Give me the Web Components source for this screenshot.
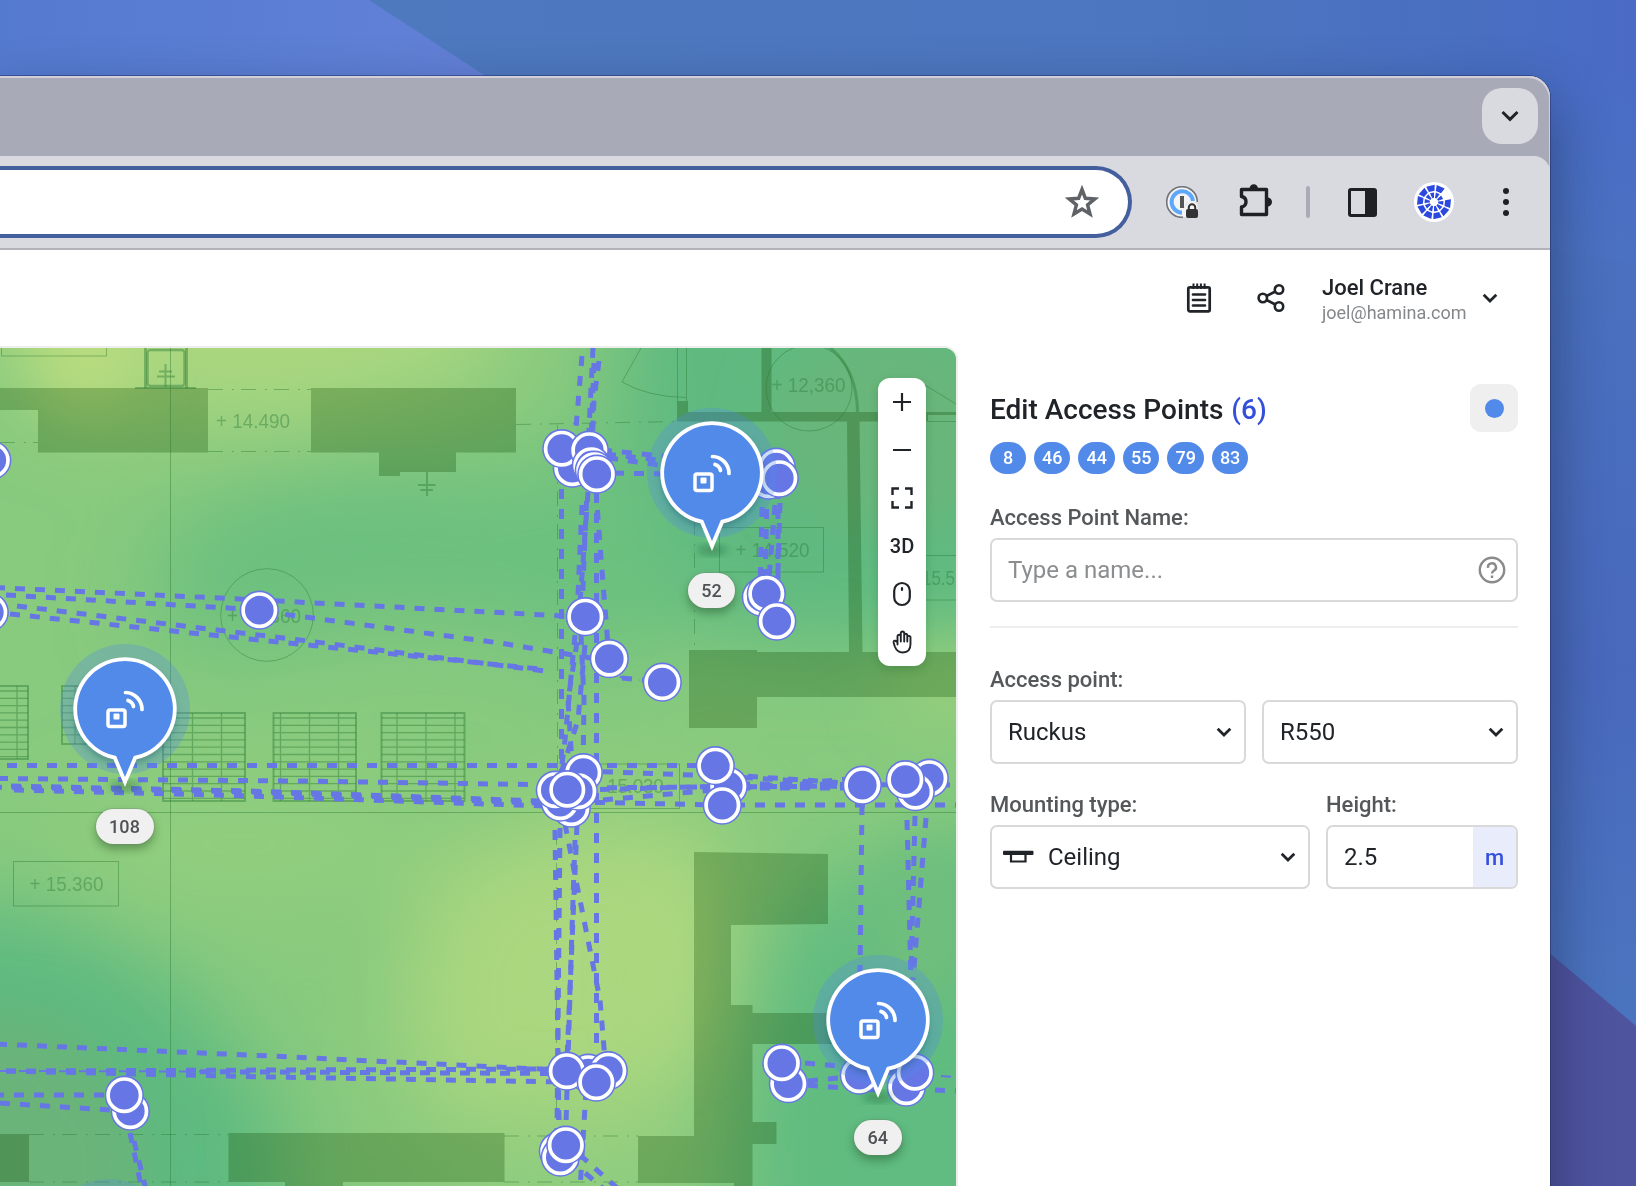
<!DOCTYPE html>
<html lang="en">
<head>
<meta charset="utf-8">
<title>Edit Access Points</title>
<style>
html,body{margin:0;height:100%;overflow:hidden}
body{font-family:Roboto,"Liberation Sans",sans-serif;color:#202428}
</style>
</head>
<body>
<desk-top>
  <browser-window>
    <tab-strip slot="chrome"></tab-strip>
    <tool-bar slot="chrome"></tool-bar>
    <app-header name="Joel Crane" mail="joel@hamina.com"></app-header>
    <app-main>
      <heat-map slot="map">
        <ap-pin style="left:711.6px;top:124.5px">52</ap-pin>
        <ap-pin style="left:124.5px;top:360.7px">108</ap-pin>
        <ap-pin style="left:877.8px;top:672.3px">64</ap-pin>
        <map-tools slot="tools"></map-tools>
      </heat-map>
      <edit-panel></edit-panel>
    </app-main>
  </browser-window>
</desk-top>
<script>
const def=(name,html,after)=>customElements.define(name,class extends HTMLElement{
  connectedCallback(){
    if(this.shadowRoot)return;
    const r=this.attachShadow({mode:'open'});
    r.innerHTML=typeof html==='function'?html(this):html;
    if(after)after(r,this);
  }
});

def('desk-top',`<style>
:host{display:grid;width:1636px;height:1186px;overflow:hidden;background:#4a72bd}
svg,div{grid-area:1/1}
div{padding-top:76px;box-sizing:border-box;height:1186px}
</style>
<svg width="1636" height="1186" aria-hidden="true">
<defs>
<linearGradient id="a" x1="0" y1="0" x2="1" y2="0"><stop offset="0" stop-color="#547acf"/><stop offset=".8" stop-color="#5f80d6"/><stop offset="1" stop-color="#637fd6"/></linearGradient>
<linearGradient id="b" x1="0" y1="0" x2="1" y2="0"><stop offset=".25" stop-color="#4e79bf"/><stop offset=".7" stop-color="#4c76bf"/><stop offset=".9" stop-color="#496fc1"/><stop offset="1" stop-color="#4a6ac6"/></linearGradient>
<linearGradient id="b2" x1="0" y1="0" x2="0" y2="1"><stop offset="0" stop-color="#4a6cc5"/><stop offset="1" stop-color="#4b77bf"/></linearGradient>
<linearGradient id="c" x1="0" y1="0" x2="0" y2="1"><stop offset="0" stop-color="#4a71bf"/><stop offset=".45" stop-color="#4969bd"/><stop offset=".8" stop-color="#4b74bf"/></linearGradient>
</defs>
<rect width="1636" height="1186" fill="url(#b)"/>
<rect x="1545" y="76" width="91" height="190" fill="url(#b2)" opacity=".55"/>
<path d="M0 0H369L487 77V100H0Z" fill="url(#a)"/>
<path d="M1540 247L1636 264V1186H1540Z" fill="url(#c)"/>
<path d="M1540 945L1636 1026V1186H1540Z" fill="#4f549f"/>
</svg><div><slot></slot></div>`);

def('browser-window',`<style>
:host{display:flex;flex-direction:column;width:1550px;height:1150px;background:#fff;border-radius:0 21px 0 0;box-shadow:0 0 0 1px rgba(25,40,90,.45),0 26px 60px rgba(15,25,50,.46)}
.c{background:#a8aab8;border-radius:0 21px 0 0;box-shadow:inset -1px 2px 0 #d2cfda}
</style><div class="c"><slot name="chrome"></slot></div><slot></slot>`);

def('tab-strip',`<style>
:host{display:flex;height:80px;align-items:center;justify-content:flex-end;padding-right:12px}
.b{width:56px;height:56px;border-radius:20px;background:#d9dae0;display:grid;place-items:center}
</style><div class="b"><svg width="20" height="14" fill="none" stroke="#202124" stroke-width="3"><path d="M2.5 3L10 10.3 17.5 3"/></svg></div>`);

const seg=(n,r0,r1,skip)=>{let o='';for(let i=0;i<n;i++){if(i===skip)continue;
  const g=.09*11/r1,a=i*2*Math.PI/n+g-1.47,b=(i+1)*2*Math.PI/n-g-1.47,p=(r,t)=>(20+r*Math.cos(t)).toFixed(1)+' '+(20+r*Math.sin(t)).toFixed(1);
  o+=`M${p(r0,a)}L${p(r1,a)}L${p(r1,b)}L${p(r0,b)}Z`;}return o};
def('tool-bar',`<style>
:host{display:flex;height:92px;box-sizing:content-box;border-bottom:2px solid #b2b3ba;background:#d9dae0;border-radius:0 16px 0 0;align-items:center}
.u{width:1132px;height:72px;box-sizing:border-box;border:4px solid #435f9e;border-left:0;border-radius:0 36px 36px 0;background:#fff;display:flex;align-items:center;justify-content:flex-end;padding-right:29px}
.i{display:flex;align-items:center;flex:1}
svg{display:block;flex:none}
.s{width:4px;height:32px;border-radius:2px;background:#aaabb9;margin:0 38px 0 33px}
</style>
<div class="u"><svg width="34" height="34" viewBox="0 0 34 34" fill="none" stroke="#5f6368" stroke-width="3.5"><path d="M17 4.500L20.4 13.3 29.8 13.9 22.600 19.900 25 29 17 24 9 29 11.400 19.900 4.200 13.900 13.600 13.300Z"/></svg></div>
<div class="i">
<svg style="margin-left:34px" width="32" height="32" viewBox="0 0 32 32"><circle cx="16" cy="16" r="15.3" fill="#f4f4f4" stroke="#747478" stroke-width="1.6"/><path d="M27 15A10.7 10.7 0 1 0 16 26.7" fill="none" stroke="#5ea7fb" stroke-width="4"/><rect x="14" y="10" width="4" height="12" fill="#565656"/><path d="M17 32V24L21 16H32V32Z" fill="#d9dae0"/><path d="M17 31V24L22 16H28L31.5 18V31Z" fill="#f4f4f4"/><rect x="20" y="23" width="12" height="9" rx="2" fill="#333"/><path d="M22.8 24V21.5A3.2 3.2 0 0 1 29.2 21.5V24" fill="none" stroke="#333" stroke-width="2"/></svg>
<svg style="margin:-4px 0 0 41px" width="34" height="36" viewBox="0 0 34 36" fill="none" stroke="#1f2023" stroke-width="3.4" stroke-linejoin="round"><path d="M2.500 7.500H27.500V32.500H2.500V25C8.500 24 8.500 15.500 2.500 14.500Z"/><path fill="#1f2023" stroke="none" d="M10.500 6.500A4.200 4.200 0 0 1 19 6.500ZM28.500 15.500A4.400 4.400 0 0 1 28.500 24.500Z"/></svg>
<div class="s"></div>
<svg width="29" height="29" viewBox="0 0 29 29"><rect x="1.5" y="1.5" width="26" height="26" rx="1.5" fill="none" stroke="#1f2023" stroke-width="3"/><path fill="#1f2023" d="M17 1H28V28H17Z"/></svg>
<svg style="margin-left:37px" width="40" height="40"><circle cx="20" cy="20" r="20" fill="#fff"/><path fill="#2b49de" d="${seg(10,11.2,17.2,1)}${seg(10,4.2,9.6)}"/></svg>
<svg style="margin-left:49px" width="6" height="28" fill="#1f2023"><circle cx="3" cy="3" r="3"/><circle cx="3" cy="14" r="3"/><circle cx="3" cy="25" r="3"/></svg>
</div>`);

def('app-header',h=>`<style>
:host{display:flex;height:96px;align-items:center;justify-content:flex-end;padding-right:52px}
svg{display:block;flex:none}
.t{width:167px;margin-left:37px}
b{display:block;font:500 22px/26px Roboto;margin-top:3px}
span{display:block;font:400 18px/24px Roboto;color:#85888b}
</style>
<svg width="26" height="32" viewBox="0 0 26 32" fill="none" stroke="#202428" stroke-width="2.7"><rect x="2.3" y="5.3" width="21.4" height="24" rx="1.5"/><path d="M7 12.500H19M7 18H19M7 23.500H19" stroke-linecap="round"/><path d="M7.500 1.500V7M11.200 1.500V7M14.900 1.500V7M18.600 1.500V7" stroke-width="2"/></svg>
<svg style="margin-left:45px" width="28" height="30" viewBox="0 0 28 30" fill="none" stroke="#202428" stroke-width="2.6"><circle cx="5.8" cy="15" r="4.2"/><circle cx="22" cy="6.500" r="4.2"/><circle cx="22" cy="23.500" r="4.2"/><path d="M9.500 13L18.300 8.500M9.500 17L18.300 21.500"/></svg>
<div class="t"><b>${h.getAttribute('name')}</b><span>${h.getAttribute('mail')}</span></div>
<svg style="margin-left:-7px" width="16" height="12" fill="none" stroke="#202428" stroke-width="2.7"><path d="M1.7 2.7L8 9 14.3 2.7"/></svg>
`);

def('app-main',`<style>
:host{display:flex;flex:1;min-height:0}
</style><slot name="map"></slot><slot></slot>`);

const lines=[
[-5,587.5,240,599,584,617],[6,595,245,609,500,643,609,661],[17,606,300,640,545,671],[10,614,240,638,500,665,540,669],[622,678,662,682],
[7,765.5,567,765.5],[-2,778.5,300,781,560,785],[11,786,250,791,540,801],[14,790,250,796,545,806],[-8,787,250,792,540,803],
[607,765.5,715,765.5],[583,771,720,776,862,785],[567,788,862,786],[580,790,728,786,862,785],[603,800,725,789,862,778],[575,802,722,805,956,805],[740,784,956,785],[740,788,862,788],[728,775,862,784],
[-3,1044,270,1056,560,1070],[6,1071,560,1069],[6,1071,270,1077,567,1082],[200,1071.7,560,1073.5],[-6,1095,110,1095],[0,1103,110,1110],
[130,1133,142,1190],[134,1141,146,1190],
[582,356,575,440],[599,361,594,400,592,450],[593,348,588,450],[594,363,591,440],
[561.5,489,561.5,790],[596.5,493,596.5,1045],[588,492,579,617],[586.5,501,584,560,582,617],[596,490,600,545,609,658],[582,505,577,617],
[575,635,565,740,560,780],[581,635,584,700,583,770],[577,642,568,700,573,780],[585,645,578,720,562,770],
[555,830,559,1130],[560,828,557,1130],[565,824,574,870,600,1000,605,1060],[577,825,567,1060],[575,840,571,960,568,1060],
[558,1090,559,1122],[567,1090,566,1125],[586,1090,580,1190],[580,1155,625,1195],[570,1160,605,1190],
[602,450,711,461],[608,458,711,472],[614,473,711,475],[606,454,711,466]];
lines.push([762,507,760,590],[767,489,765,590],[778,489,778,590],[780,503,778,570],[775,505,768,590],
[862,805,860,975],[907,820,911,980],[915,816,911,975],[926,818,913,980],
[805,1063,914,1073],[808,1081,914,1070],[788,1084,906,1092],[935,1090,960,1091]);
const thin=[[-1,1071,200,1071.5],[600,674,640,680],[941,1076,956,1077]];
const nodes=[[-8.5,460],[-11,612],[259,610],[572,468],[561.5,448.5],[589,450],[591,465],[594,470],[596.5,474],
[763,478],[768,480],[776,467],[779,478],[761,597],[766,593.5],[776.5,621],[585,616.5],[609,658.5],[662,682],
[583,772.5],[571,808],[560,802],[555,790],[578,791],[567,789.5],[728,786],[715,765.5],[722,805],[862,785],[929,778],[915,791.5],[905,779.5],
[130,1111],[124,1095],[588,1073],[608,1070.5],[566.5,1071],[596,1082],[558,1151],[560,1157],[565.5,1145],
[788,1083.5],[781.5,1063],[859,1075],[906,1087],[914.5,1072.5]].map(([x,y])=>[x+.3,y+.2]);
const stall=(x,y,w,h,v)=>{let d=`M${x} ${y}h${w}v${h}h${-w}z`,t='';for(let i=5;i<h-2;i+=7.3)t+=`M${x} ${y+i}h${w}`;v.forEach(k=>t+=`M${k} ${y}v${h}`);return `<path d="${d}" stroke-width="2"/><path d="${t}" stroke-width="1.3"/>`};
def('heat-map',()=>`<style>
:host{display:block;position:relative;width:956px;height:840px;border:solid #eee;border-width:2px 2px 0 0;border-radius:0 14px 0 0;overflow:hidden}
svg{display:block}
text{font:19.6px "Liberation Sans",Arial,sans-serif;fill:#2f7a3a;fill-opacity:.42}
.tools{position:absolute;left:878px;top:30px}
</style>
<svg width="956" height="838" viewBox="0 348 956 838">
<defs><filter id="f" filterUnits="userSpaceOnUse" x="-300" y="100" width="1600" height="1400"><feGaussianBlur stdDeviation="44"/></filter><filter id="g" filterUnits="userSpaceOnUse" x="-300" y="100" width="1600" height="1400"><feGaussianBlur stdDeviation="27"/></filter></defs>
<rect y="340" width="956" height="850" fill="#88ca7e"/>
<g filter="url(#f)">
<path d="M30 200H540L480 380 300 425 180 420 60 410 -20 330Z" fill="#aad77f"/>
<path d="M150 550Q250 450 420 470T560 420V640Q400 610 300 640T150 620Z" fill="#6cc07f"/>
<path d="M630 160H1150V620L820 650 620 620 610 480Z" fill="#5eba80"/>
<ellipse cx="600" cy="560" rx="80" ry="110" fill="#6cc17f"/>
<ellipse cx="240" cy="845" rx="180" ry="55" fill="#93cf7e"/>
<path d="M440 860L600 810 730 830 710 1000 680 1120 430 1120 400 1000Z" fill="#aad77f"/>
<path d="M-180 900L50 910 180 980 280 1110 290 1400H-180Z" fill="#5dba80"/>
<path d="M780 900L1150 790V1380H740L735 1080Z" fill="#60bc80"/>
<path d="M450 1150H700V1260H450Z" fill="#8fcd7f"/>
</g>
<g filter="url(#g)">
<ellipse cx="88" cy="350" rx="50" ry="62" fill="#b8db7f"/>
<ellipse cx="890" cy="430" rx="120" ry="100" fill="#69b67a"/>
<path d="M-160 1000L60 1020 140 1110 150 1360H-160Z" fill="#6ab479"/>
<ellipse cx="670" cy="970" rx="25" ry="90" fill="#aed880"/>
<ellipse cx="960" cy="690" rx="80" ry="44" fill="#93cd7c"/>
<ellipse cx="925" cy="930" rx="60" ry="80" fill="#70be7d"/>
</g>
<g fill="#c0d2b8" style="mix-blend-mode:multiply">
<path d="M0 388H208V452.500H38V410H0ZM311 388H516V452.500H456V472H400V476H379V452.500H311Z"/>
<path d="M761.500 348H771.500V412H956V415H928V421.500H859.500L862.500 652H956V697H757V728H689V650H757V652H849L847 421.500H677V401H688V412H761.500Z"/>
<path d="M694 852L828 854V924L731 925V1005H752.500V1013H845V1044H752.500V1122H776.500V1144H752.500V1186H734V1183H638V1136H694Z"/>
<path d="M0 1134H29V1182H0ZM228.500 1133H504.500V1182H343V1186H285V1182H228.500Z"/>
</g>
<g fill="none" stroke="#2b7a35" stroke-opacity=".42">
<path d="M170.500 348V1186M0 812.500H956M1.500 348V356H106.500V348M13.500 861.500H118.500V906H13.500ZM719.500 527.500H823.500V572H719.500ZM576 764H679.500V808.500H590M926 555.500H956M926 600H956M928 421.500H956M641 348L622 382Q648 397 686 397.500M677.500 348V401M686.500 348V401M925 385L956 404"/>
<circle cx="267" cy="615" r="46.300"/><circle cx="809" cy="388" r="43"/>
<path d="M828 346Q857 368 857.500 412" stroke-width="3"/>
<path d="M145.500 348V388M186.500 348V388" stroke-width="3"/><rect x="147.500" y="350" width="37" height="36" rx="3" stroke-width="2.500"/>
<path d="M165.500 364V388M159 371.500H172M157 376.500H175M427 472V496M418 485H435.500M420.500 490H433M135 388H196" stroke-width="2"/>
<path stroke-dasharray="15 9 2 7" d="M208 389.500H311M208 451.500H311M29 1134.500H228M29 1182H228M504 1136H638M504 1182H638M516 424.500L677 421.500M0 442.500H38M557.500 425V770M556.500 830V1110M694.500 520V650"/>
${stall(-20,686,48,73,[17])}${stall(62,686,82,58,[75,104])}${stall(163,713,82,88,[192.5,221.5])}${stall(273.500,713,82.500,88,[280.5,309.5,338.5])}${stall(381.500,713,83,88,[397,426,455])}
</g>
<text x="216" y="427.500" textLength="74" lengthAdjust="spacingAndGlyphs">+ 14.490</text>
<text x="29.500" y="890.500" textLength="74" lengthAdjust="spacingAndGlyphs">+ 15.360</text>
<text x="735.500" y="556.500" textLength="74" lengthAdjust="spacingAndGlyphs">+ 14.520</text>
<text x="771.500" y="391.500" textLength="74" lengthAdjust="spacingAndGlyphs">+ 12,360</text>
<text x="227" y="622.500" textLength="74" lengthAdjust="spacingAndGlyphs">+ 14.360</text>
<text x="922" y="584.500" textLength="33" lengthAdjust="spacingAndGlyphs">15.5</text><text x="607" y="793" textLength="57">15.030</text>
<g fill="none" stroke="#6677e5" stroke-dasharray="10 10"><g stroke-width="5">${lines.map(l=>`<polyline points="${l.join(' ')}"/>`).join('')}</g><g stroke-width="2">${thin.map(l=>`<polyline points="${l.join(' ')}"/>`).join('')}</g></g>
${nodes.map(([x,y])=>`<circle cx="${x}" cy="${y}" r="19.600" fill="#6677e5"/><circle cx="${x}" cy="${y}" r="16.200" fill="#6677e5" stroke="#fff" stroke-width="3.700"/>`).join('')}
<circle cx="109" cy="1244" r="65" fill="#5389eb" fill-opacity=".25"/>
</svg><slot></slot><div class="tools"><slot name="tools"></slot></div>`);

def('ap-pin',`<style>
:host{position:absolute;display:flex;flex-direction:column;align-items:center;width:140px;margin:-70px 0 0 -70px}
svg{display:block;overflow:visible}
.n{margin-top:30px;height:35px;box-sizing:border-box;padding:0 13.500px;border-radius:18px;background:#f0f0f0;font:500 18px/35px Roboto;letter-spacing:.1px;color:#4f5154;box-shadow:0 0 0 1px rgba(120,130,120,.3),0 5px 10px rgba(20,60,20,.4)}
</style><svg width="140" height="140" viewBox="-70 -70 140 140">
<defs><filter id="s" x="-50%" y="-50%" width="200%" height="200%"><feGaussianBlur stdDeviation="4"/></filter></defs>
<circle r="65" fill="#5389eb" fill-opacity=".29"/>
<circle r="49" cy="5" fill="#1c4f60" fill-opacity=".5" filter="url(#s)"/>
<ellipse cx="0" cy="77" rx="15" ry="4" fill="#1b5a30" fill-opacity=".5" filter="url(#s)"/>
<path d="M-10.200 48.700A49.800 49.800 0 1 1 10.200 48.700L0 73Z" fill="#528aea" stroke="#fff" stroke-width="3.800"/>
<g fill="none" stroke="#fff" stroke-width="3.500"><rect x="-17" y="1" width="17" height="16.500" rx="2"/><g stroke-linecap="round" stroke-width="3.700"><path d="M.5 -16.500A17 17 0 0 1 17 .5M3 -8.500A8 8 0 0 1 8.500 -2.500"/></g></g>
<rect x="-11.500" y="4.500" width="6" height="6" rx="1" fill="#fff"/>
</svg><div class="n"><slot></slot></div>`);

def('map-tools',`<style>
:host{display:flex;flex-direction:column;width:48px;background:#fff;border-radius:12px;box-shadow:0 4px 10px rgba(20,80,30,.22)}
div{height:48px;display:grid;place-items:center;font:500 20px/48px Roboto;color:#202428}
</style>
<div><svg width="20" height="20" stroke="#202428" stroke-width="2.200"><path d="M1 10H19M10 1V19"/></svg></div>
<div><svg width="20" height="20" stroke="#202428" stroke-width="2.200"><path d="M1 10H19"/></svg></div>
<div><svg width="22" height="22" fill="none" stroke="#202428" stroke-width="2.400"><path d="M1.500 8V1.500H8M14 1.500H20.500V8M20.500 14V20.500H14M8 20.500H1.500V14"/></svg></div>
<div>3D</div>
<div><svg width="20" height="26" fill="none" stroke="#202428" stroke-width="2.200"><rect x="2.200" y="2" width="15.600" height="22" rx="7.800"/><path d="M10 7V9" stroke-linecap="round"/></svg></div>
<div><svg width="20" height="24" viewBox="0 0 20 24" fill="none" stroke="#202428" stroke-width="1.900" stroke-linecap="round" stroke-linejoin="round"><path d="M5.500 14.500V6A1.700 1.700 0 0 1 8.800 6V3.200A1.700 1.700 0 0 1 12.200 3.200V5A1.600 1.600 0 0 1 15.300 5V7.500A1.600 1.600 0 0 1 18.500 7.500V14C18.500 19.500 15.500 22.500 10.800 22.500 6 22.500 4.200 20 2.800 16.500L1.600 12.500C1.300 10.600 3.500 10 4.300 11.500M8.800 6V11.500M12.200 5V11.500M15.300 7V11.500"/></svg></div>`);

def('ap-chip',`<style>:host{box-sizing:border-box;min-width:36px;height:32px;padding:0 8px;border-radius:16px;background:#528aea;color:#fff;font:500 18px/32px Roboto;text-align:center}</style><slot></slot>`);

def('form-field',h=>`<style>
:host{display:flex;flex-direction:column}
label{font:500 22px/26px Roboto;color:#55585a;white-space:nowrap}
label+.b{margin-top:7px}
.b{height:64px;box-sizing:border-box;border:2px solid #d9d9d9;border-radius:7px;display:flex;align-items:center;overflow:hidden;background:#fff}
.v{flex:1;padding-left:16px;font:400 24px/32px Roboto;color:${h.hasAttribute('hint')?'#8b8d8f':'#202428'};white-space:nowrap}
svg{display:block;flex:none}
</style>${h.hasAttribute('label')?`<label>${h.getAttribute('label')}</label>`:''}
<div class="b"><slot name="pre"></slot><span class="v"><slot></slot></span>${h.hasAttribute('select')?'<svg style="margin-right:12px" width="16" height="12" fill="none" stroke="#202428" stroke-width="2.7"><path d="M1.700 2.700L8 9 14.300 2.700"/></svg>':''}<slot name="post"></slot></div>`);

def('edit-panel',`<style>
:host{display:block;width:528px;padding:38px 0 0 32px}
.h{display:flex;justify-content:space-between;height:48px}
h1{margin:0;font:500 28px/32px Roboto;padding-top:10px;color:#202428;white-space:nowrap}
h1 span{color:#3350dd;margin-left:1px}
.d{width:48px;height:48px;border-radius:11px;background:#efefef;display:grid;place-items:center}
.d i{width:19px;height:19px;border-radius:50%;background:#528aea}
.c{display:flex;gap:8px;margin:10px 0 31px}
hr{border:0;height:2px;background:#eee;margin:24px 0 39px}
.r{display:flex;gap:16px;align-items:flex-end}
.r form-field{flex:1}
.r2{margin-top:28px}.r2 form-field:first-child{flex:0 0 320px}
.m{align-self:stretch;width:43px;background:#e8ecfb;color:#3350dd;font:500 22px/62px Roboto;text-align:center}
</style>
<div class="h"><h1>Edit Access Points <span>(6)</span></h1><div class="d"><i></i></div></div>
<div class="c"><ap-chip>8</ap-chip><ap-chip>46</ap-chip><ap-chip>44</ap-chip><ap-chip>55</ap-chip><ap-chip>79</ap-chip><ap-chip>83</ap-chip></div>
<form-field label="Access Point Name:" hint>Type a name...<svg slot="post" style="margin-right:10px" width="28" height="28" viewBox="0 0 28 28" fill="none" stroke="#8a8a8a" stroke-width="2.400"><circle cx="14" cy="14" r="12.200"/><path d="M10 11.800A4 4 0 1 1 15.800 14.800Q14 16 14 17.500" /><path d="M14 19.500V22"/></svg></form-field>
<hr>
<div class="r"><form-field label="Access point:" select>Ruckus</form-field><form-field select>R550</form-field></div>
<div class="r r2"><form-field label="Mounting type:" select><svg slot="pre" style="margin:0 -6px 0 11px;display:block" width="31" height="14"><rect width="30.500" height="4.200" y=".8" rx="1" fill="#202428"/><path d="M8 4V11.500H22.500V4" fill="none" stroke="#202428" stroke-width="2.200"/></svg><span style="padding-left:4px">Ceiling</span></form-field><form-field label="Height:">2.5<div slot="post" class="m">m</div></form-field></div>`);
</script>
</body>
</html>
